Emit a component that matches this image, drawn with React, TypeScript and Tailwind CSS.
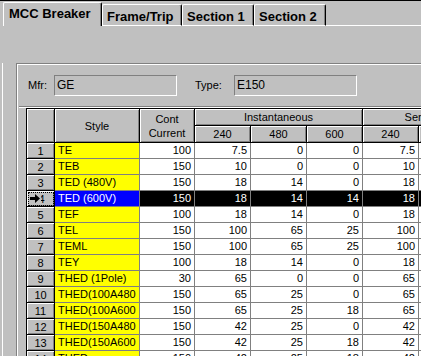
const rows: string[][] = [
  ["1", "TE", "100", "7.5", "0", "0", "7.5"],
  ["2", "TEB", "150", "10", "0", "0", "10"],
  ["3", "TED (480V)", "150", "18", "14", "0", "18"],
  ["4", "TED (600V)", "150", "18", "14", "14", "18"],
  ["5", "TEF", "100", "18", "14", "0", "18"],
  ["6", "TEL", "150", "100", "65", "25", "100"],
  ["7", "TEML", "150", "100", "65", "25", "100"],
  ["8", "TEY", "100", "18", "14", "0", "18"],
  ["9", "THED (1Pole)", "30", "65", "0", "0", "65"],
  ["10", "THED(100A480", "150", "65", "25", "0", "65"],
  ["11", "THED(100A600", "150", "65", "25", "18", "65"],
  ["12", "THED(150A480", "150", "42", "25", "0", "42"],
  ["13", "THED(150A600", "150", "42", "25", "18", "42"],
  ["14", "THED", "150", "42", "25", "18", "42"],
];

const fixed =
  "bg-[#c0c0c0] border-r border-b border-black shadow-[inset_1px_1px_0_#fff,inset_-1px_-1px_0_#808080] flex items-center justify-center";

function Tab({ label, active, w }: { label: string; active?: boolean; w: string }) {
  if (active) {
    return (
      <div className={`${w} h-[24px] border-t border-l border-r border-t-white border-l-white border-r-black rounded-t-[2px] shadow-[inset_-1px_0_0_#808080] pl-[5px] pt-[3px] text-[13px] font-bold leading-[15px]`}>
        {label}
      </div>
    );
  }
  return (
    <div className={`${w} h-[22px] border-t border-l border-r border-b border-t-white border-l-white border-r-black border-b-white rounded-t-[2px] shadow-[inset_-1px_0_0_#808080] pl-[4px] pt-[4px] text-[13px] font-bold leading-[15px]`}>
      {label}
    </div>
  );
}

function Arrow() {
  return (
    <svg width="10" height="9" viewBox="0 0 10 9" className="block">
      <path d="M0 3h5V0l5 4.5L5 9V6H0z" fill="#000" />
    </svg>
  );
}

export default function App() {
  return (
    <div className="w-[421px] h-[356px] overflow-hidden bg-[#c0c0c0] border-t border-black text-black font-['Liberation_Sans',Arial,sans-serif]">
      {/* tab strip */}
      <div className="flex items-end h-[25px]">
        <div className="w-[3px] h-px" />
        <Tab label="MCC Breaker" active w="w-[99px]" />
        <Tab label="Frame/Trip" w="w-[80px]" />
        <Tab label="Section 1" w="w-[72px]" />
        <Tab label="Section 2" w="w-[72px]" />
        <div className="flex-1 h-px bg-white" />
      </div>

      {/* tab page */}
      <div className="ml-[2px] border-l border-white h-full">
        <div className="ml-[13px] mt-[37px] border-t border-l border-[#808080] shadow-[inset_1px_1px_0_#fff] h-full pl-[2px] pt-[11px]">
          <div className="flex items-center h-[21px] text-[11px]">
            <div className="w-[35px] pl-[9px]">Mfr:</div>
            <div className="w-[123px] h-[21px] border-t border-l border-b border-r border-t-[#808080] border-l-[#808080] border-b-white border-r-white pl-[2px] text-[12px] leading-[19px]">GE</div>
            <div className="w-[39px] ml-[18px]">Type:</div>
            <div className="w-[123px] h-[21px] border-t border-l border-b border-r border-t-[#808080] border-l-[#808080] border-b-white border-r-white pl-[2px] text-[12px] leading-[19px]">E150</div>
          </div>
          <div className="mt-[10px] h-px bg-[#808080]" />
          <div className="h-px bg-white" />

          {/* grid */}
          <div className="ml-[7px] w-max border-t border-l border-black text-[11px] leading-[14px]">
            <div className="flex">
              <div className={`${fixed} w-[28px] h-[34px]`} />
              <div className={`${fixed} w-[85px] h-[34px]`}>Style</div>
              <div className={`${fixed} w-[55px] h-[34px] flex-col`}>
                <span>Cont</span>
                <span>Current</span>
              </div>
              <div className="flex flex-col">
                <div className={`${fixed} w-[168px] h-[17px]`}>Instantaneous</div>
                <div className="flex">
                  <div className={`${fixed} w-[56px] h-[17px]`}>240</div>
                  <div className={`${fixed} w-[56px] h-[17px]`}>480</div>
                  <div className={`${fixed} w-[56px] h-[17px]`}>600</div>
                </div>
              </div>
              <div className="flex flex-col">
                <div className={`${fixed} w-[168px] h-[17px]`}>Service Entrance</div>
                <div className="flex">
                  <div className={`${fixed} w-[56px] h-[17px]`}>240</div>
                  <div className={`${fixed} w-[56px] h-[17px]`}>480</div>
                  <div className={`${fixed} w-[56px] h-[17px]`}>600</div>
                </div>
              </div>
            </div>

            {rows.map((r) => {
              const sel = r[0] === "4";
              const num = sel
                ? "bg-black text-white border-r border-b border-[#808080]"
                : "bg-white border-r border-b border-[#808080]";
              return (
                <div key={r[0]} className="flex h-[16px]">
                  {sel ? (
                    <div className={`${fixed} w-[28px] h-[16px] relative outline-1 outline-dotted outline-black -outline-offset-2`}>
                      <span className="pl-[2px]">4</span>
                      <div className="absolute left-[3px] top-[3px] bg-[#c0c0c0] w-[11px] pr-[1px]">
                        <Arrow />
                      </div>
                    </div>
                  ) : (
                    <div className={`${fixed} w-[28px] h-[16px]`}>{r[0]}</div>
                  )}
                  <div className={`w-[85px] h-[16px] pl-[3px] leading-[15px] border-r border-b border-[#808080] whitespace-nowrap overflow-hidden ${sel ? "bg-[#0000ff] text-white" : "bg-[#ffff00]"}`}>
                    {r[1]}
                  </div>
                  <div className={`w-[55px] h-[16px] pr-[3px] text-right leading-[15px] ${num}`}>{r[2]}</div>
                  {r.slice(3).map((v, i) => (
                    <div key={i} className={`w-[56px] h-[16px] pr-[3px] text-right leading-[15px] ${num}`}>{v}</div>
                  ))}
                  <div className={`w-[56px] h-[16px] pr-[3px] text-right leading-[15px] ${num}`}>{r[4]}</div>
                  <div className={`w-[56px] h-[16px] pr-[3px] text-right leading-[15px] ${num}`}>{r[5]}</div>
                </div>
              );
            })}
          </div>
        </div>
      </div>
    </div>
  );
}
